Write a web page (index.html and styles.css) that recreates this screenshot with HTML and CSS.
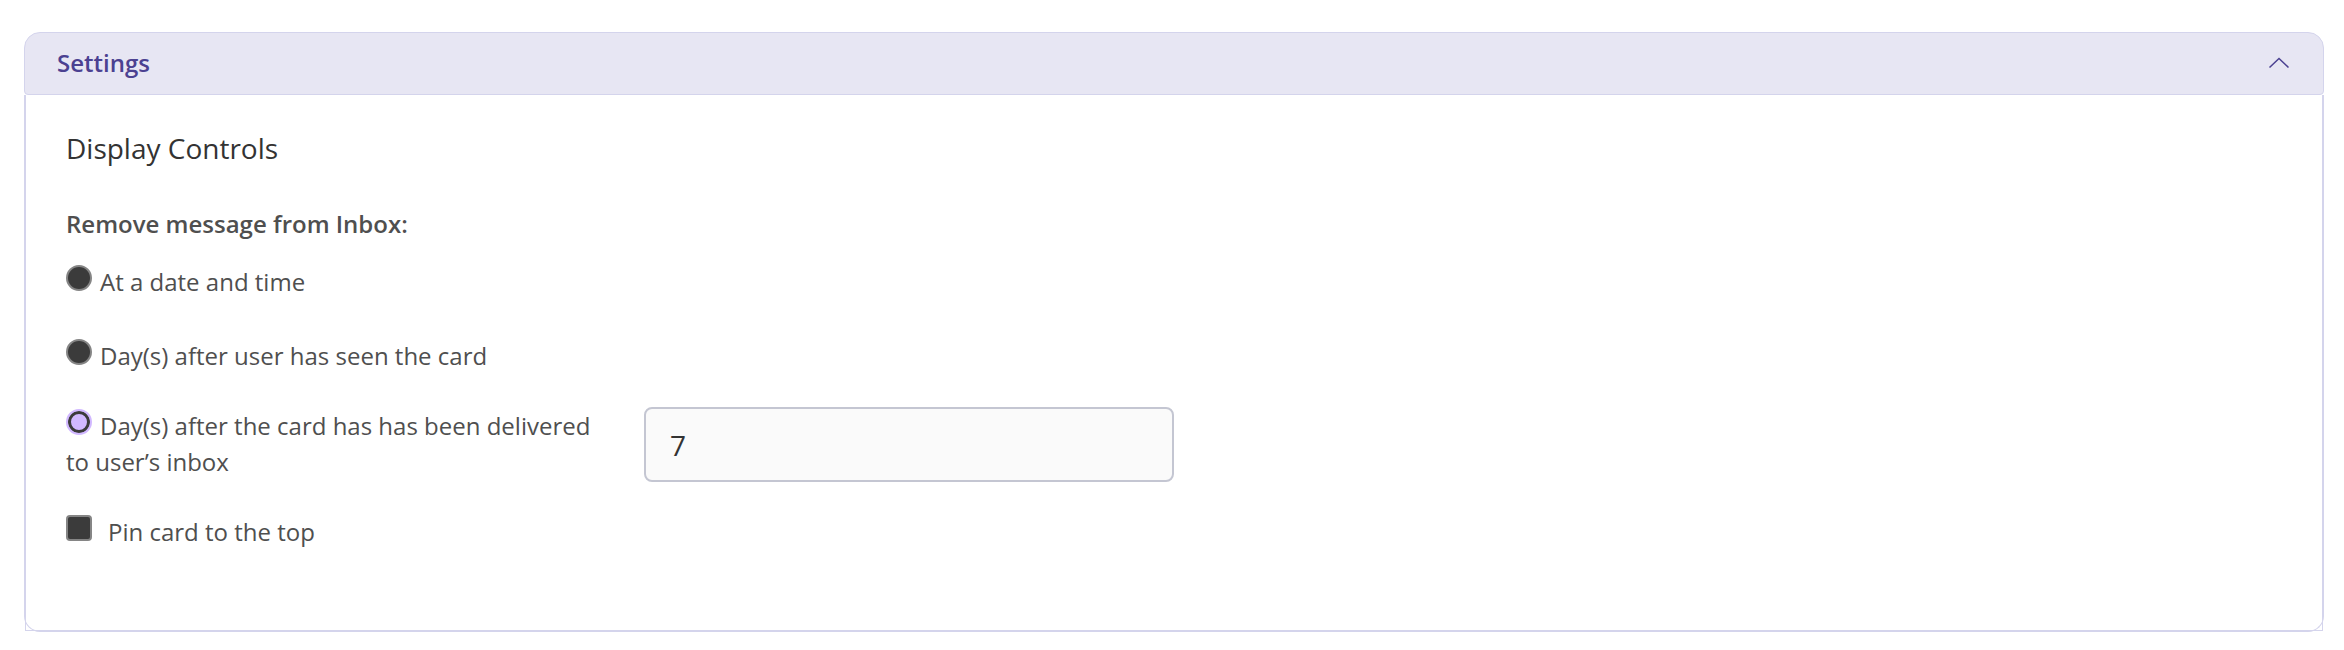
FILE: index.html
```html
<!DOCTYPE html>
<html lang="en">
<head>
<meta charset="utf-8">
<title>Settings</title>
<link rel="stylesheet" href="styles.css">
</head>
<body>
<section class="accordion">
  <h2 class="accordion-heading">
    <button class="accordion-toggle" type="button" aria-expanded="true" aria-controls="settings-panel">
      <span>Settings</span>
      <svg class="chevron" viewBox="0 0 22 12" aria-hidden="true"><path d="M1.5 10.5 L11 1.5 L20.5 10.5" fill="none" stroke="currentColor" stroke-width="1.5"/></svg>
    </button>
  </h2>
  <div class="accordion-panel" id="settings-panel">
    <form class="panel-content">
      <h3 class="section-title">Display Controls</h3>
      <p class="group-label" id="remove-label">Remove message from Inbox:</p>
      <div class="options" role="radiogroup" aria-labelledby="remove-label">
        <label class="option"><input class="choice radio" type="radio" name="remove" value="date">At a date and time</label>
        <label class="option"><input class="choice radio" type="radio" name="remove" value="seen">Day(s) after user has seen the card</label>
        <div class="option-row">
          <label class="option-label"><input class="choice radio" type="radio" name="remove" value="delivered" checked>Day(s) after the card has has been delivered to user’s inbox</label>
          <input class="days-input" type="text" inputmode="numeric" value="7" aria-label="Days after delivery">
        </div>
      </div>
      <label class="pin"><input class="choice checkbox" type="checkbox" name="pin">Pin card to the top</label>
    </form>
  </div>
</section>
</body>
</html>
```
FILE: styles.css
```css
* {
  box-sizing: border-box;
}

body {
  margin: 0;
  padding: 32px 20px 16px 24px;
  background: #fff;
  color: #4f4f4f;
  font-family: "Open Sans", sans-serif;
  font-size: 24px;
  line-height: 36px;
}

.accordion-heading {
  margin: 0;
  font-size: 24px;
}

.accordion-toggle {
  display: flex;
  align-items: center;
  justify-content: space-between;
  width: 100%;
  padding: 12px 33px 13px 32px;
  border: 1px solid #d4d4ec;
  border-radius: 16px 16px 4px 4px;
  background: #e7e6f3;
  color: #4b4191;
  font: inherit;
  font-weight: 600;
  text-align: left;
}

.chevron {
  width: 22px;
  height: 12px;
}

.accordion-panel {
  border: 1px solid #d4d4ec;
  border-top: 0;
  border-radius: 0 0 16px 16px;
}

.panel-content {
  padding: 33px 40px 80px;
  border: 1px solid #d4d4ec;
  border-top: 0;
}

.section-title {
  margin: 0 0 38px;
  color: #333;
  font-size: 28px;
  font-weight: 500;
  line-height: 40px;
}

.group-label {
  margin: 0 0 22px;
  font-weight: 600;
}

.option {
  display: block;
  margin-bottom: 38px;
}

.option-row {
  display: grid;
  grid-template-columns: 1fr 1fr 2fr;
  align-items: start;
  gap: 48px;
  margin: -5px 0 32px;
}

.option-label {
  padding-top: 1px;
}

.choice {
  appearance: none;
  width: 26px;
  height: 26px;
  margin: 0 8px 0 0;
  border: 2px solid #858585;
  background: #3b3b3b;
  vertical-align: baseline;
}

.radio {
  border-radius: 50%;
}

.radio:checked {
  border-color: #d1b8ff;
  background: #d1b8ff;
  box-shadow: inset 0 0 0 3px #3b3b3b;
}

.checkbox {
  margin-right: 16px;
  border-radius: 4px;
}

.days-input {
  width: 100%;
  height: 75px;
  padding: 0 24px;
  border: 2px solid #c4c6d2;
  border-radius: 8px;
  background: #fafafa;
  color: #333;
  font: inherit;
  font-size: 28px;
}

.pin {
  display: block;
  font-weight: 500;
}
```
